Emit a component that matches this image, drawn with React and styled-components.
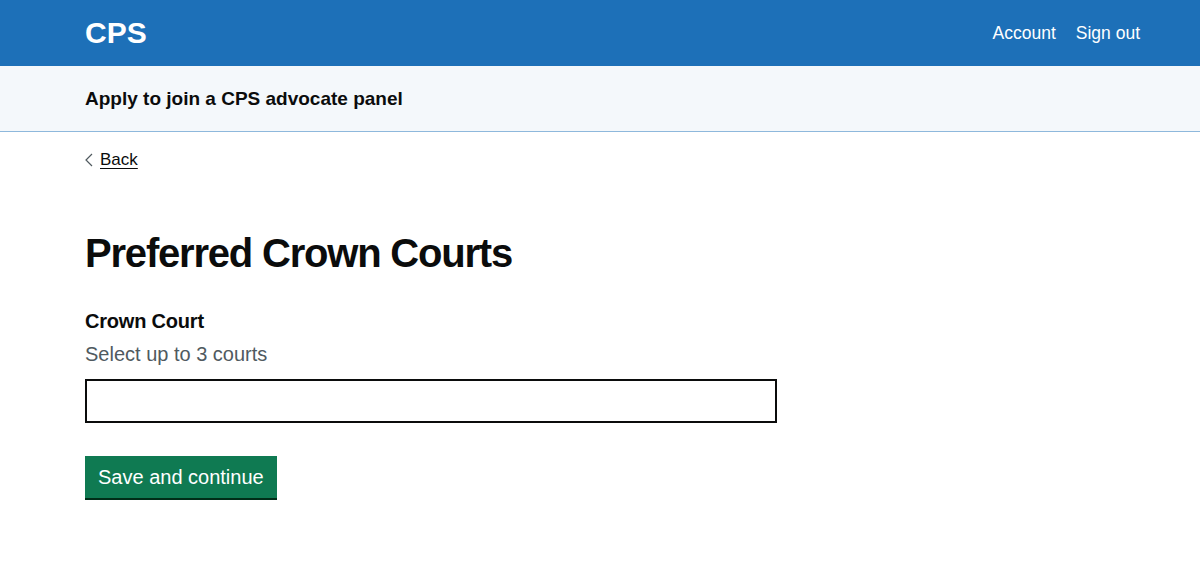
import styled, { createGlobalStyle } from 'styled-components';

const GlobalStyle = createGlobalStyle`
  html, body {
    margin: 0;
    padding: 0;
    background: #ffffff;
    font-family: "Liberation Sans", Arial, sans-serif;
    color: #0b0c0c;
    -webkit-font-smoothing: antialiased;
  }
`;

const Container = styled.div`
  max-width: 1030px;
  margin: 0 auto;
`;

const Header = styled.header`
  background-color: #1d70b8;
  height: 66px;
  color: #ffffff;
`;

const HeaderInner = styled.div`
  display: flex;
  align-items: center;
  justify-content: space-between;
  height: 100%;
  padding: 0 60px 0 85px;
`;

const Logo = styled.a`
  font-size: 30px;
  font-weight: 700;
  color: #ffffff;
  text-decoration: none;
  line-height: 1;
  padding-bottom: 1px;
`;

const NavList = styled.nav`
  display: flex;
  gap: 20px;
`;

const NavLink = styled.a`
  color: #ffffff;
  font-size: 17.5px;
  text-decoration: none;
  line-height: 20px;
`;

const ServiceNav = styled.div`
  background-color: #f4f8fb;
  border-bottom: 1px solid #8eb8dc;
  height: 65px;
`;

const ServiceInner = styled(Container)`
  display: flex;
  align-items: center;
  height: 100%;
`;

const ServiceName = styled.span`
  font-size: 19px;
  font-weight: 700;
  line-height: 25px;
`;

const BackLink = styled.a`
  display: inline-flex;
  align-items: center;
  gap: 7px;
  margin-top: 18px;
  font-size: 17px;
  line-height: 20px;
  color: #0b0c0c;
  text-decoration: underline;
  text-decoration-thickness: 1px;
  text-underline-offset: 3px;

  svg {
    width: 8px;
    height: 14px;
  }
`;

const Main = styled.main`
  padding-top: 60px;
  padding-bottom: 60px;
`;

const FormColumn = styled.div`
  max-width: 692px;
`;

const Heading = styled.h1`
  margin: 0 0 34px;
  font-size: 40px;
  line-height: 44px;
  font-weight: 700;
  letter-spacing: -1.2px;
`;

const FormGroup = styled.div`
  margin-bottom: 33px;
`;

const Label = styled.label`
  display: block;
  font-size: 20px;
  line-height: 25px;
  font-weight: 700;
  letter-spacing: -0.2px;
`;

const Hint = styled.div`
  margin-top: 8px;
  font-size: 20px;
  line-height: 25px;
  color: #505a5f;
`;

const Input = styled.input`
  display: block;
  box-sizing: border-box;
  width: 100%;
  height: 44px;
  margin-top: 12px;
  border: 2px solid #0b0c0c;
  border-radius: 0;
  padding: 5px;
  font: inherit;
  font-size: 19px;
`;

const Button = styled.button`
  display: inline-block;
  height: 42px;
  padding: 0 13px;
  border: 0;
  border-radius: 0;
  background-color: #0f7a52;
  color: #ffffff;
  font-family: inherit;
  font-size: 20px;
  line-height: 25px;
  box-shadow: 0 2px 0 #002d18;
  cursor: pointer;
`;

const App = () => {
  return (
    <>
      <GlobalStyle />
      <Header>
        <HeaderInner>
          <Logo href="#">CPS</Logo>
          <NavList>
            <NavLink href="#">Account</NavLink>
            <NavLink href="#">Sign out</NavLink>
          </NavList>
        </HeaderInner>
      </Header>
      <ServiceNav>
        <ServiceInner>
          <ServiceName>Apply to join a CPS advocate panel</ServiceName>
        </ServiceInner>
      </ServiceNav>
      <Container>
        <BackLink href="#">
          <svg viewBox="0 0 8 14" fill="none">
            <polyline points="7,1 1,7 7,13" stroke="#505a5f" strokeWidth="1.2" />
          </svg>
          Back
        </BackLink>
        <Main>
          <FormColumn>
            <Heading>Preferred Crown Courts</Heading>
            <FormGroup>
              <Label htmlFor="court">Crown Court</Label>
              <Hint>Select up to 3 courts</Hint>
              <Input id="court" type="text" />
            </FormGroup>
            <Button type="button">Save and continue</Button>
          </FormColumn>
        </Main>
      </Container>
    </>
  );
};

export default App;
